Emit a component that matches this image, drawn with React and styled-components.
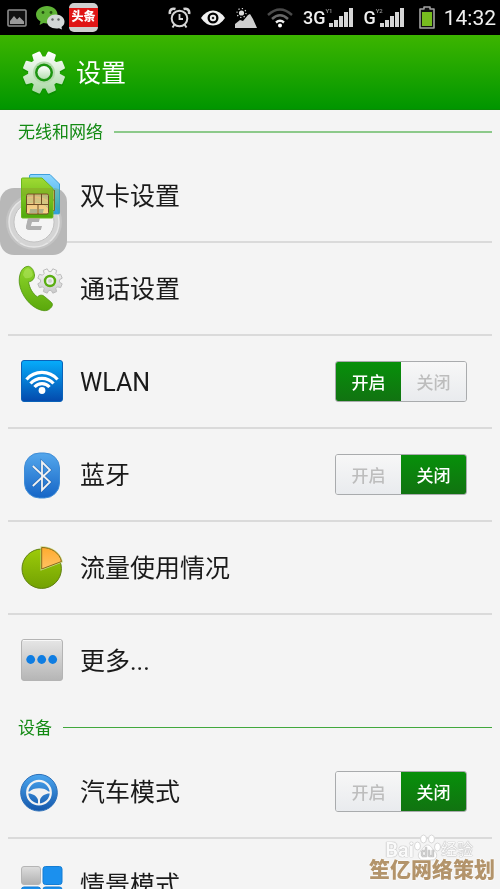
import React, { useState } from "react";
import styled, { createGlobalStyle, css } from "styled-components";

const GlobalStyle = createGlobalStyle`
  * {
    box-sizing: border-box;
  }
  body {
    margin: 0;
    background: #f4f4f4;
    font-family: Roboto, "Noto Sans CJK SC", sans-serif;
  }
`;

const gearPath = (cx, cy, outer, inner, teeth = 8) => {
  const step = (Math.PI * 2) / teeth;
  const shape = [
    [-0.34, inner],
    [-0.21, outer],
    [0.21, outer],
    [0.34, inner]
  ];
  const points = [];
  for (let i = 0; i < teeth; i++) {
    shape.forEach(([offset, radius]) => {
      const angle = step * (i + 0.5 + offset);
      points.push(
        `${(cx + Math.cos(angle) * radius).toFixed(2)} ${(
          cy +
          Math.sin(angle) * radius
        ).toFixed(2)}`
      );
    });
  }
  return `M${points.join("L")}Z`;
};

const Gradient = ({ id, from, to }) => (
  <linearGradient id={id} x1="0" y1="0" x2="0" y2="1">
    <stop offset="0" stopColor={from} />
    <stop offset="1" stopColor={to} />
  </linearGradient>
);

const GearIcon = () => (
  <svg width="48" height="48" viewBox="0 0 48 48">
    <defs>
      <Gradient id="gear" from="#ffffff" to="#a9d8a3" />
      <Gradient id="hub" from="#ffffff" to="#b5deb0" />
    </defs>
    <path
      d={gearPath(24, 26, 21, 15)}
      fill="#087a00"
      opacity="0.35"
      stroke="#087a00"
      strokeWidth="2"
      strokeLinejoin="round"
    />
    <path
      d={gearPath(24, 24.5, 20.5, 15)}
      fill="url(#gear)"
      stroke="url(#gear)"
      strokeWidth="2"
      strokeLinejoin="round"
    />
    <circle cx="24" cy="24.500" r="11" fill="#b5dcae" />
    <circle cx="24" cy="24.500" r="9" fill="#1c9410" />
    <circle cx="24" cy="24.500" r="6.500" fill="url(#hub)" />
  </svg>
);

const SimIcon = () => (
  <svg width="49" height="49" viewBox="0 0 49 49">
    <defs>
      <Gradient id="simBack" from="#8ed7ff" to="#2f9fe0" />
      <Gradient id="simFront" from="#9fda33" to="#4fa80c" />
      <Gradient id="chip" from="#e3b979" to="#fbd68c" />
    </defs>
    <path
      d="M13 3.500H32L41.500 13V42Q41.500 43 40.500 43H13Q11.500 43 11.500 42V5Q11.500 3.500 13 3.500Z"
      fill="url(#simBack)"
      stroke="#3d9fdb"
    />
    <path d="M31 19H36.500V39.500H31Z" fill="#f0c47c" stroke="#76652f" />
    <path d="M31 29H36" stroke="#76652f" />
    <path
      d="M4.500 7H24L35 17.500V46Q35 47 34 47H4.500Q3.500 47 3.500 46V8Q3.500 7 4.500 7Z"
      fill="url(#simFront)"
      stroke="#6bb81c"
    />
    <rect x="8.500" y="23" width="22" height="20" rx="1.500" fill="url(#chip)" stroke="#6d4d25" />
    <path
      d="M8.500 33.500H30.500M16 23V33.500M23.500 23V33.500M20 33.500V43"
      stroke="#6d4d25"
      fill="none"
    />
  </svg>
);

const CallIcon = () => (
  <svg width="49" height="49" viewBox="0 0 49 49">
    <defs>
      <Gradient id="phone" from="#8fd62c" to="#5aa80b" />
      <Gradient id="callGear" from="#fafafa" to="#c9c9c9" />
    </defs>
    <path
      d="M10.300 2.300C14 3 16 6.500 16.500 11C16.800 14.800 14 17.500 10.500 17.800C11.500 24 14.500 29.500 19.500 33C21 30.800 24.500 30.500 26.500 32.500L33.500 38.500C35 40 34.500 41.500 33.500 43C31 46.500 27.500 47.500 22.500 46C12.500 43 3 31.500 1.300 19C.600 11 3.500 2.500 10.300 2.300Z"
      fill="url(#phone)"
      stroke="#4c920c"
      strokeWidth="0.8"
    />
    <path
      d="M5 11C6 6 8 4 10.500 4.200C13 5 14.500 8 14.800 11C14 13.500 10 15 7 14Z"
      fill="#b5e765"
      opacity="0.5"
    />
    <path
      d={gearPath(32, 17, 12.5, 9.5)}
      fill="url(#callGear)"
      stroke="#bcbcbc"
      strokeLinejoin="round"
    />
    <circle cx="32" cy="17" r="5" fill="#efefef" stroke="#5aae12" strokeWidth="2.400" />
    <circle cx="32" cy="17" r="2" fill="#cfd4cc" />
  </svg>
);

const WlanIcon = () => (
  <svg width="49" height="49" viewBox="0 0 49 49">
    <defs>
      <Gradient id="wlan" from="#06adfb" to="#0449ac" />
    </defs>
    <rect x="3.500" y="3.500" width="41" height="41" rx="2.500" fill="url(#wlan)" stroke="#0a62b8" />
    <g fill="none" stroke="#fff" strokeWidth="3.200">
      <path d="M8.500 22.500A20.500 20.500 0 0 1 39.500 22.500" />
      <path d="M12.500 26.500A15.500 15.500 0 0 1 35.500 26.500" />
      <path d="M16.500 30A10 10 0 0 1 31.500 30" />
    </g>
    <circle cx="24" cy="33.500" r="3.400" fill="#fff" />
  </svg>
);

const BluetoothIcon = () => (
  <svg width="49" height="49" viewBox="0 0 49 49">
    <defs>
      <Gradient id="bluetooth" from="#54a7ec" to="#1565c6" />
    </defs>
    <rect x="6.500" y="3" width="35" height="45" rx="15" fill="url(#bluetooth)" stroke="#3f8cd6" />
    <path
      d="M14.800 16L32 32L24 40V12L32 20L14.800 36"
      fill="none"
      stroke="#1b4f8f"
      strokeWidth="3"
      opacity="0.5"
    />
    <path
      d="M14.800 16L32 32L24 40V12L32 20L14.800 36"
      fill="none"
      stroke="#f2f2f2"
      strokeWidth="1.800"
    />
  </svg>
);

const UsageIcon = () => (
  <svg width="49" height="49" viewBox="0 0 49 49">
    <defs>
      <Gradient id="usage" from="#9ccb0a" to="#72a102" />
      <Gradient id="slice" from="#ffab2e" to="#ffc264" />
    </defs>
    <circle cx="23.700" cy="25.700" r="19.700" fill="url(#usage)" stroke="#5f7f10" />
    <path
      d="M23.700 26V4.500C33 4.500 41.500 9.500 43.500 18.500Z"
      fill="url(#slice)"
      stroke="#c9dc8c"
      strokeWidth="2.400"
    />
    <path d="M23.700 26V4.500C33 4.500 41.500 9.500 43.500 18.500Z" fill="url(#slice)" stroke="#8a6a14" />
  </svg>
);

const MoreIcon = () => (
  <svg width="49" height="49" viewBox="0 0 49 49">
    <defs>
      <Gradient id="more" from="#e6e6e6" to="#b5b5b5" />
    </defs>
    <rect x="3.500" y="3.500" width="41" height="41" rx="2.500" fill="url(#more)" stroke="#b4b4b4" />
    <path d="M5 4.500H43" stroke="#f8f8f8" />
    <g fill="#0f7de2">
      <circle cx="12.700" cy="23.500" r="4.400" />
      <circle cx="23.700" cy="23.500" r="4.400" />
      <circle cx="34.700" cy="23.500" r="4.400" />
    </g>
  </svg>
);

const CarIcon = () => (
  <svg width="49" height="49" viewBox="0 0 49 49">
    <defs>
      <Gradient id="car" from="#4ba6ef" to="#1457ab" />
    </defs>
    <circle cx="21" cy="25.700" r="18.300" fill="url(#car)" stroke="#2c6fb8" />
    <circle cx="21" cy="25.700" r="11.800" fill="none" stroke="#f2f2f2" strokeWidth="2.200" />
    <path
      d="M9 24.500H11.500C15 20 27 20 30.500 24.500H33V26.500H30C26 27.500 22.800 29.500 22 33V37.500H20V33C19.200 29.500 16 27.500 12 26.500H9Z"
      fill="#f2f2f2"
    />
  </svg>
);

const SceneIcon = () => (
  <svg width="49" height="49" viewBox="0 0 49 49">
    <defs>
      <Gradient id="scene" from="#dedede" to="#b0b0b0" />
    </defs>
    <rect x="3.500" y="6.500" width="19" height="18" rx="2.500" fill="url(#scene)" stroke="#b5b5b5" />
    <g fill="#1b90ee" stroke="#147dd3">
      <rect x="25" y="6.500" width="19" height="18" rx="2.500" />
      <rect x="3.500" y="27" width="19" height="18" rx="2.500" />
      <rect x="25" y="27" width="19" height="18" rx="2.500" />
    </g>
  </svg>
);

const GalleryGlyph = () => (
  <svg width="20" height="18" viewBox="0 0 20 18">
    <rect x="1" y="1" width="18" height="16" rx="1" fill="#111" stroke="#8d8d8d" strokeWidth="1.600" />
    <path d="M3 15V12L7 7L10 10.500L12.500 8L17 12.500V15Z" fill="#9a9a9a" />
  </svg>
);

const WechatGlyph = () => (
  <svg width="29" height="24" viewBox="0 0 29 24">
    <path
      d="M11 0C17 0 21.500 4 21.500 8.500S17 17.500 11 17.500L7.500 17L3.500 19L4.500 15.500C1.500 13.500 0 11.500 0 8.500C0 4 5 0 11 0Z"
      fill="#5fb336"
    />
    <circle cx="7" cy="6.500" r="1.400" fill="#24520f" />
    <circle cx="15" cy="6.500" r="1.400" fill="#24520f" />
    <path
      d="M19.500 8.500C25 8.500 28.500 12 28.500 15.500C28.500 18 27.500 19.500 25.500 21L26 23.500L23 22.200C16.500 23.500 11 20 11 15.500C11 12 14.500 8.500 19.500 8.500Z"
      fill="#d4d8d8"
    />
    <circle cx="16.500" cy="13.500" r="1.200" fill="#606464" />
    <circle cx="22.500" cy="13.500" r="1.200" fill="#606464" />
  </svg>
);

const AlarmGlyph = () => (
  <svg width="23" height="22" viewBox="0 0 23 22" fill="none" stroke="#d5d5d5">
    <circle cx="11.500" cy="11.500" r="7.800" strokeWidth="2" />
    <path d="M11.500 7V12H15" strokeWidth="1.800" />
    <path d="M2 7C1 3 4 1 7.500 2M21 7C22 3 19 1 15.500 2" strokeWidth="2.600" />
    <path d="M6.500 17.500L4.500 20.500M16.500 17.500L18.500 20.500" strokeWidth="2" />
  </svg>
);

const EyeGlyph = () => (
  <svg width="24" height="16" viewBox="0 0 24 16">
    <path d="M0 8Q5 .500 12 .500T24 8Q19 15.500 12 15.500T0 8Z" fill="#f0f0f0" />
    <circle cx="12" cy="8" r="5.500" fill="#000" />
    <circle cx="12" cy="8" r="3.200" fill="#f0f0f0" />
    <circle cx="12" cy="8" r="1.300" fill="#222" />
  </svg>
);

const SunHillGlyph = () => (
  <svg width="22" height="20" viewBox="0 0 22 20">
    <circle cx="6.500" cy="5" r="2.600" fill="#ddd" />
    <circle
      cx="6.500"
      cy="5"
      r="4.500"
      fill="none"
      stroke="#ddd"
      strokeWidth="1.200"
      strokeDasharray="1.200 2.300"
    />
    <path d="M0 20V16L5 12L8 13L13 7L15 6L18 11L22 20Z" fill="#cfcfcf" />
  </svg>
);

const WifiGlyph = () => (
  <svg width="26" height="20" viewBox="0 0 26 20" fill="none" strokeWidth="2.400">
    <path d="M1 7Q13 -4 25 7" stroke="#4a4a4a" />
    <path d="M5 11Q13 3.500 21 11" stroke="#686868" />
    <path d="M9 14.500Q13 11 17 14.500" stroke="#eee" />
    <circle cx="13" cy="17.500" r="2" fill="#fff" />
  </svg>
);

const SignalGlyph = () => (
  <svg width="24" height="19" viewBox="0 0 24 19" fill="#d6d6d6">
    <rect x="0" y="15" width="4" height="4" />
    <rect x="5" y="12" width="4" height="7" />
    <rect x="10" y="8" width="4" height="11" />
    <rect x="15" y="4" width="4" height="15" />
    <rect x="20" y="0" width="4" height="19" />
  </svg>
);

const BatteryGlyph = () => (
  <svg width="16" height="23" viewBox="0 0 16 23">
    <path
      d="M5 1H11V3H15V22H1V3H5Z"
      fill="#111"
      stroke="#a2a2a2"
      strokeWidth="1.600"
      strokeLinejoin="round"
    />
    <rect x="3" y="6" width="10" height="14" fill="#77bc1f" />
  </svg>
);

const PawGlyph = () => (
  <svg width="27" height="27" viewBox="0 0 27 27" fill="#fff" stroke="#d8d8d8">
    <ellipse cx="9.500" cy="5" rx="3" ry="4" />
    <ellipse cx="17.500" cy="5" rx="3" ry="4" />
    <ellipse cx="3.500" cy="12" rx="3" ry="4" />
    <ellipse cx="23.500" cy="13" rx="3" ry="4" />
    <path d="M13.500 11C17 11 18 15 21 17.500C24 20 23 26 18 26H9C4 26 3 20 6 17.500C9 15 10 11 13.500 11Z" />
    <text
      x="13.500"
      y="23"
      textAnchor="middle"
      fontSize="12"
      fontWeight="700"
      fill="#d0d0d0"
      stroke="none"
    >
      du
    </text>
  </svg>
);

const Toggle = ({ name, on }) => {
  const [checked, setChecked] = useState(on);
  return (
    <ToggleGroup role="group" aria-label={name}>
      <ToggleButton type="button" $active={checked} onClick={() => setChecked(true)}>
        开启
      </ToggleButton>
      <ToggleButton type="button" $active={!checked} onClick={() => setChecked(false)}>
        关闭
      </ToggleButton>
    </ToggleGroup>
  );
};

const sections = [
  {
    title: "无线和网络",
    soft: true,
    items: [
      { name: "双卡设置", Icon: SimIcon },
      { name: "通话设置", Icon: CallIcon },
      { name: "WLAN", Icon: WlanIcon, on: true },
      { name: "蓝牙", Icon: BluetoothIcon, on: false },
      { name: "流量使用情况", Icon: UsageIcon },
      { name: "更多...", Icon: MoreIcon }
    ]
  },
  {
    title: "设备",
    items: [
      { name: "汽车模式", Icon: CarIcon, on: false },
      { name: "情景模式", Icon: SceneIcon }
    ]
  }
];

const App = () => {
  return (
    <Page>
      <GlobalStyle />
      <StatusBar>
        <StatusGroup $gap={9}>
          <GalleryGlyph />
          <WechatGlyph />
        </StatusGroup>
        <NewsBadge>
          <span>头条</span>
        </NewsBadge>
        <StatusGroup $gap={10} $end>
          <AlarmGlyph />
          <EyeGlyph />
          <SunHillGlyph />
          <WifiGlyph />
          <Network>
            3G<sup>Y1</sup>
            <SignalGlyph />
          </Network>
          <Network>
            G<sup>Y2</sup>
            <SignalGlyph />
          </Network>
        </StatusGroup>
        <BatteryGlyph />
        <Clock>14:32</Clock>
      </StatusBar>
      <Header>
        <GearIcon />
        <Title>设置</Title>
      </Header>
      <Content>
        {sections.map(section => (
          <section key={section.title}>
            <SectionTitle $soft={section.soft}>{section.title}</SectionTitle>
            <List>
              {section.items.map(({ name, Icon, on }) => (
                <Row key={name}>
                  {on === undefined ? (
                    <RowLink href="#">
                      <Icon />
                      <RowText>{name}</RowText>
                    </RowLink>
                  ) : (
                    <>
                      <RowLabel>
                        <Icon />
                        <RowText>{name}</RowText>
                      </RowLabel>
                      <Toggle name={name} on={on} />
                    </>
                  )}
                </Row>
              ))}
            </List>
          </section>
        ))}
      </Content>
      <FloatingButton type="button" aria-label="悬浮按钮">
        <svg width="67" height="67" viewBox="0 0 67 67">
          <circle cx="34" cy="34" r="28" fill="#c4c4c4" />
          <circle cx="34" cy="34" r="25" fill="#d4d4d4" stroke="#e6e6e6" strokeWidth="1.500" />
          <circle cx="34" cy="34" r="20" fill="#fff" stroke="#c0c0c0" />
          <path
            d="M30 21H44L43 25H34L33 30H40L39 34H32L31 38H42L41 42H29Q25 42 26 38Z"
            fill="#b0b0b0"
          />
        </svg>
      </FloatingButton>
      <Watermark>
        <Baidu>
          Bai
          <PawGlyph />
          <small>经验</small>
        </Baidu>
        <Credit>笙亿网络策划</Credit>
      </Watermark>
    </Page>
  );
};

const Page = styled.div`
  position: relative;
  display: flex;
  flex-direction: column;
  height: 100vh;
  overflow: hidden;
  background: #f4f4f4;
  color: #1a1a1a;
`;

const StatusBar = styled.div`
  display: flex;
  flex: none;
  align-items: center;
  height: 35px;
  padding: 0 4px 0 7px;
  background: #000;
  color: #f0f0f0;
`;

const StatusGroup = styled.div`
  display: flex;
  align-items: center;
  gap: ${props => props.$gap}px;
  ${props =>
    props.$end &&
    css`
      margin: 0 15px 0 auto;
    `}
`;

const NewsBadge = styled.div`
  display: flex;
  align-items: center;
  width: 29px;
  height: 29px;
  margin-left: 4px;
  border-radius: 5px;
  background: #cfcfcf;

  span {
    width: 100%;
    background: #e01515;
    color: #fff;
    font-size: 12px;
    font-weight: 900;
    line-height: 19px;
    text-align: center;
  }
`;

const Network = styled.div`
  display: flex;
  align-items: center;
  font-size: 18px;
  font-weight: 500;
  line-height: 20px;

  sup {
    align-self: flex-start;
    width: 4px;
    font-size: 6px;
    line-height: 6px;
    color: #999;
  }
`;

const Clock = styled.time`
  margin-left: 9px;
  font-size: 21px;
  line-height: 24px;
`;

const Header = styled.header`
  display: flex;
  flex: none;
  align-items: center;
  gap: 8px;
  height: 75px;
  padding: 0 20px;
  background: linear-gradient(#3db500, #009600);
  border-bottom: 1px solid #0a8a05;
`;

const Title = styled.h1`
  margin: 0;
  padding-top: 4px;
  color: #fff;
  font-size: 25px;
  font-weight: 400;
  line-height: 36px;
`;

const Content = styled.main`
  flex: 1;
  min-height: 0;
  overflow-y: auto;
  scrollbar-width: none;
`;

const SectionTitle = styled.h2`
  display: flex;
  align-items: center;
  gap: 11px;
  height: 40px;
  margin: 0;
  padding: 3px 8px 0 18px;
  color: #138a13;
  font-size: 17px;
  font-weight: 400;
  line-height: 24px;

  &::after {
    content: "";
    flex: 1;
    height: ${props => (props.$soft ? 2 : 1)}px;
    background: ${props => (props.$soft ? "#8cc98a" : "#41a83c")};
  }
`;

const List = styled.ul`
  margin: 0 8px;
  padding: 0;
  list-style: none;
`;

const Row = styled.li`
  display: flex;
  align-items: center;
  padding: 0 25px 0 10px;

  &:not(:last-child) {
    border-bottom: 2px solid #dadada;
  }
`;

const rowContent = css`
  display: flex;
  flex: 1;
  align-items: center;
  gap: 13px;
  min-height: 91px;
  color: #1a1a1a;
  font-size: 25px;
  line-height: 36px;
  text-decoration: none;
`;

const RowLink = styled.a`
  ${rowContent}
`;

const RowLabel = styled.div`
  ${rowContent}
`;

const RowText = styled.span`
  padding-top: 2px;
`;

const ToggleGroup = styled.div`
  display: flex;
  width: 132px;
  height: 41px;
  overflow: hidden;
  border: 1px solid #a9abad;
  border-radius: 3px;
`;

const ToggleButton = styled.button`
  flex: 1;
  padding: 0;
  border: 0;
  background: ${props =>
    props.$active
      ? "linear-gradient(#07900a, #117311)"
      : "linear-gradient(#f7f7f7, #e9ebee)"};
  color: ${props => (props.$active ? "#fff" : "#bdbdbd")};
  font-family: inherit;
  font-size: 17px;
  font-weight: 500;
  cursor: pointer;
`;

const FloatingButton = styled.button`
  position: absolute;
  top: 188px;
  left: 0;
  display: flex;
  width: 67px;
  height: 67px;
  padding: 0;
  border: 0;
  border-radius: 14px;
  background: #b8b8b8;
  mix-blend-mode: darken;
`;

const Watermark = styled.div`
  position: absolute;
  right: 5px;
  bottom: 5px;
  display: flex;
  flex-direction: column;
  align-items: flex-end;
  pointer-events: none;
`;

const Baidu = styled.div`
  display: flex;
  align-items: flex-end;
  height: 27px;
  margin: 0 22px -5px 0;
  color: #fafafa;
  font-size: 20px;
  font-weight: 700;
  line-height: 22px;
  text-shadow: 0 0 1px #aaa, 0 0 1px #aaa;

  small {
    font-size: 16px;
    font-weight: 400;
  }
`;

const Credit = styled.div`
  color: #b3946b;
  font-size: 21px;
  font-weight: 900;
  line-height: 28px;
  text-shadow: 0 0 2px #fff, 0 0 2px #fff;
`;

export default App;
